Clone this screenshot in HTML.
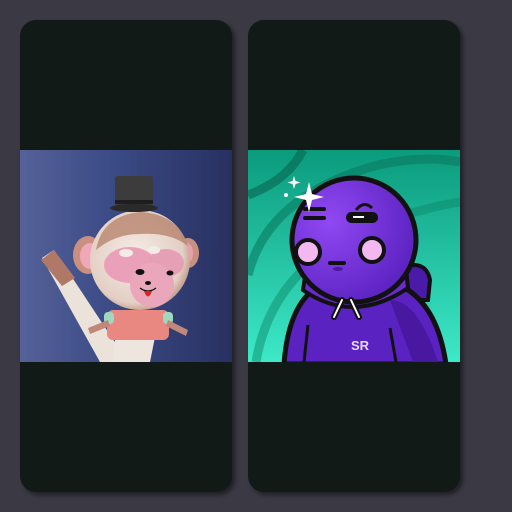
<!DOCTYPE html>
<html><head><style>
html,body{margin:0;padding:0;width:512px;height:512px;background:#3a3944;overflow:hidden}
.card{position:absolute;top:20px;width:212px;height:472px;background:#121a17;border-radius:16px;overflow:hidden;box-shadow:3px 3px 4px rgba(0,0,0,0.45)}
.img{position:absolute;left:0;top:130px;width:212px;height:212px}
</style></head><body>
<div class="card" style="left:20px">
<svg class="img" viewBox="0 0 212 212">
<defs><linearGradient id="bg1" x1="0" x2="1"><stop offset="0" stop-color="#556198"/><stop offset="0.45" stop-color="#3a4a85"/><stop offset="1" stop-color="#283060"/></linearGradient>
<radialGradient id="fur" cx="0.45" cy="0.45" r="0.6"><stop offset="0" stop-color="#f5ece6"/><stop offset="0.8" stop-color="#e3cfc4"/><stop offset="1" stop-color="#b98d7a"/></radialGradient></defs>
<rect width="212" height="212" fill="url(#bg1)"/>
<path d="M22 108 L34 100 L100 200 L95 212 L80 212 Z" fill="#ebe3da"/>
<path d="M21 110 L34 100 L55 128 L42 136 Z" fill="#b07866"/>
<path d="M92 212 L96 182 L136 182 L130 212 Z" fill="#eee6de"/>
<rect x="87" y="160" width="62" height="30" rx="6" fill="#e88880"/>
<rect x="84" y="162" width="10" height="12" rx="4" fill="#9fd8c0"/>
<rect x="143" y="162" width="10" height="12" rx="4" fill="#9fd8c0"/>
<path d="M68 178 L88 170 L90 176 L70 184Z" fill="#c08878"/>
<path d="M148 170 L168 180 L166 186 L146 176Z" fill="#c08878"/>
<ellipse cx="68" cy="105" rx="15" ry="19" fill="#c99080"/><ellipse cx="70" cy="106" rx="10" ry="13" fill="#f0a8b8"/>
<ellipse cx="168" cy="103" rx="11" ry="15" fill="#c99080"/><ellipse cx="167" cy="103" rx="6" ry="10" fill="#e8a0b0"/>
<circle cx="120" cy="110" r="50" fill="url(#fur)"/>
<path d="M76 100 Q82 66 120 62 Q158 64 168 96 Q150 82 120 84 Q95 84 76 100Z" fill="#b07a62" opacity="0.7"/>
<ellipse cx="110" cy="115" rx="26" ry="18" fill="#eaa0b8"/><ellipse cx="146" cy="113" rx="18" ry="14" fill="#e6a0b6"/>
<ellipse cx="106" cy="103" rx="7" ry="4" fill="#f3ece6"/><ellipse cx="134" cy="100" rx="6" ry="4" fill="#f3ece6"/>
<circle cx="132" cy="135" r="22" fill="#eaa7bb"/>
<ellipse cx="120" cy="122" rx="4.5" ry="3" fill="#111"/><ellipse cx="150" cy="123" rx="3.5" ry="2.5" fill="#111"/>
<ellipse cx="128" cy="133" rx="3" ry="2" fill="#111"/>
<path d="M120 138 Q128 144 136 138" stroke="#111" stroke-width="1.2" fill="none"/>
<path d="M124 141 Q128 152 132 141Z" fill="#e02020"/>
<rect x="95" y="26" width="38" height="30" rx="3" fill="#3c3c3c"/>
<rect x="95" y="50" width="38" height="4" fill="#1e1e1e"/>
<ellipse cx="114" cy="58" rx="24" ry="4" fill="#2a2a2a"/>
</svg>
</div>
<div class="card" style="left:248px">
<svg class="img" viewBox="0 0 212 212">
<defs><linearGradient id="bg2" x1="0" y1="0" x2="0" y2="1"><stop offset="0" stop-color="#0b9a7c"/><stop offset="1" stop-color="#3de9c8"/></linearGradient>
<radialGradient id="hd" cx="0.3" cy="0.35" r="0.75"><stop offset="0" stop-color="#9048f2"/><stop offset="1" stop-color="#5a22c0"/></radialGradient></defs>
<rect width="212" height="212" fill="url(#bg2)"/>
<path d="M0 45 Q40 30 55 0" stroke="#0a6e58" stroke-width="9" fill="none" opacity="0.7"/>
<path d="M0 125 Q20 45 130 15 Q175 5 212 12" stroke="#0a7a60" stroke-width="9" fill="none" opacity="0.6"/>
<path d="M8 212 Q25 110 140 70 Q185 56 212 52" stroke="#0c8a6c" stroke-width="9" fill="none" opacity="0.5"/>
<path d="M150 118 Q178 108 182 130 L180 150 L150 150Z" fill="#4a1aa8" stroke="#111" stroke-width="4"/>
<path d="M36 214 Q40 160 65 140 Q105 120 160 140 Q190 160 198 214Z" fill="#5a22c0" stroke="#111" stroke-width="5"/>
<path d="M142 150 Q170 150 190 212 L165 212 Z" fill="#4818a0"/>
<path d="M55 140 Q105 175 160 138 L158 118 Q108 145 58 120Z" fill="#6a2ad0" stroke="#111" stroke-width="4"/>
<path d="M60 175 L56 212 M142 178 L148 212" stroke="#111" stroke-width="3"/>
<circle cx="106" cy="90" r="62" fill="url(#hd)" stroke="#111" stroke-width="5"/>
<path d="M57 59 H76 M57 68 H76" stroke="#111" stroke-width="4" stroke-linecap="round"/>
<rect x="98" y="62" width="32" height="11" rx="5.5" fill="#111"/>
<path d="M105 67 H116" stroke="#fff" stroke-width="2"/>
<path d="M108 60 Q116 50 124 58" stroke="#111" stroke-width="3" fill="none"/>
<circle cx="60" cy="102" r="12" fill="#f3b8f0" stroke="#111" stroke-width="4"/>
<circle cx="124" cy="100" r="12" fill="#f3b8f0" stroke="#111" stroke-width="4"/>
<path d="M82 113 H96" stroke="#111" stroke-width="4" stroke-linecap="round"/>
<ellipse cx="90" cy="119" rx="5" ry="2" fill="#4a1aa0"/>
<path d="M86 167 L94 150 M103 150 L111 167" stroke="#111" stroke-width="6" stroke-linecap="round"/>
<path d="M86 167 L94 150 M103 150 L111 167" stroke="#fff" stroke-width="2" stroke-linecap="round"/>
<text x="103" y="200" font-family="Liberation Sans, sans-serif" font-weight="bold" font-size="13" fill="#e8d8ff">SR</text>
<path d="M46 26 l1.5 5 l5 1.5 l-5 1.5 l-1.5 5 l-1.5-5 l-5-1.5 l5-1.5Z M61 32 l3 12 l12 3 l-12 3 l-3 12 l-3-12 l-12-3 l12-3Z" fill="#fff"/>
<circle cx="38" cy="45" r="2" fill="#fff"/>
</svg>
</div>
</body></html>
